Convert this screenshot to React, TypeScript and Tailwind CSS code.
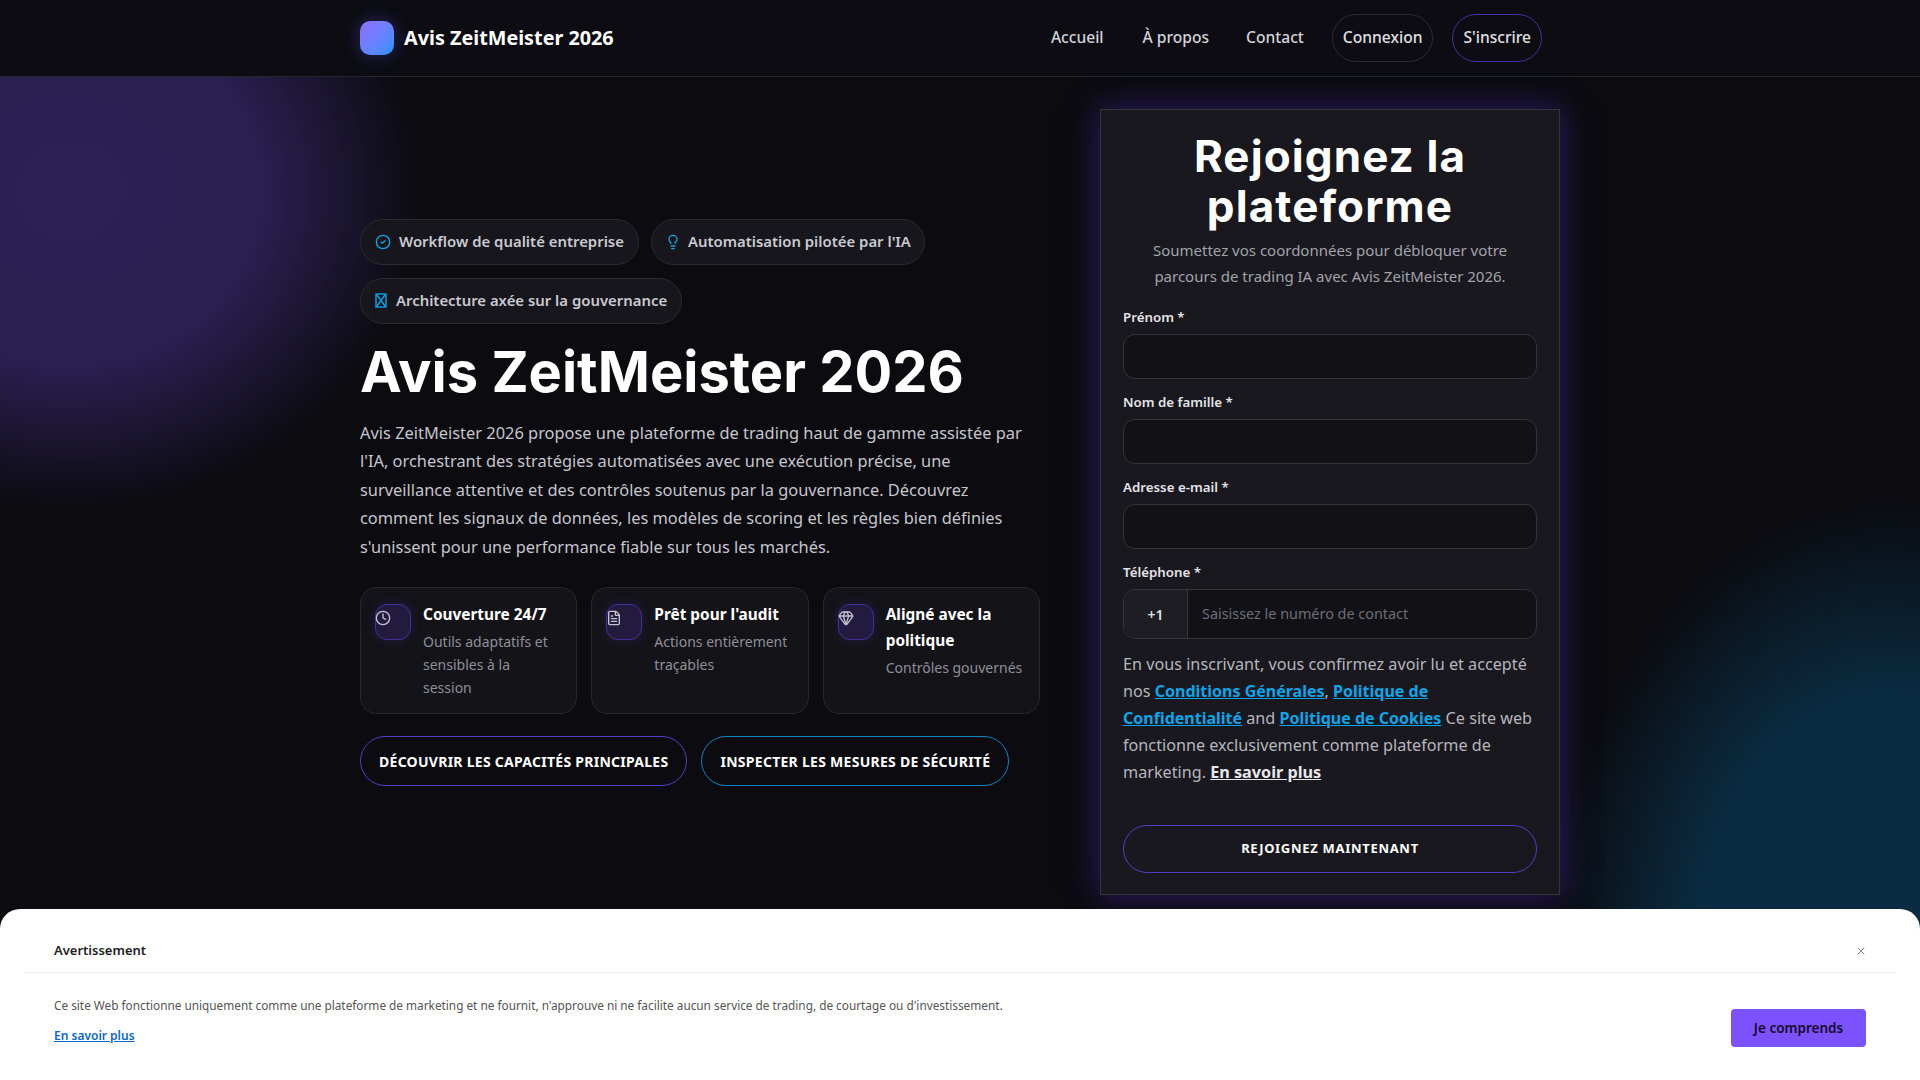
import { Clock, FileText, Gem, CircleCheck, Lightbulb, X } from "lucide-react";

const chipClass = "flex h-[46px] items-center rounded-full border border-[#2b2b33] bg-[#16161c] pl-[14px] pr-[14px] text-[14.9px] font-semibold text-[#c9c9d1]";
const labelClass = "block h-[27px] text-[13.3px] font-semibold leading-[20px] text-[#e4e4e8]";
const linkClass = "text-[16px] font-bold text-[#0ea5e9] underline";

function Field({ label }: { label: string }) {
  return (
    <div className="mb-[13px]">
      <label className={labelClass}>{label}</label>
      <div className="h-[45px] rounded-xl border border-[#34343b] bg-[#111116]" />
    </div>
  );
}

function Feature({ icon, title, desc }: { icon: React.ReactNode; title: string; desc: string }) {
  return (
    <div className="flex h-[127px] gap-3 rounded-2xl border border-[#27272e] bg-[#131318] px-[14px] pt-[14px]">
      <div className="mt-[2px] h-[36px] w-[36px] shrink-0 rounded-xl border border-[#43309a] bg-[#231b3d] pt-[5px] text-[#c4c4cc] shadow-[0_0_12px_rgba(90,50,200,0.25)]">
        <div className="-ml-[1px]">{icon}</div>
      </div>
      <div className="min-w-0">
        <div className="text-[15.4px] font-bold leading-[26px] text-white">{title}</div>
        <div className="mt-[2px] text-[14px] leading-[23px] text-[#8f8f98]">{desc}</div>
      </div>
    </div>
  );
}

export default function App() {
  return (
    <div className="relative h-screen w-full overflow-hidden bg-[#0b0b10] bg-[radial-gradient(ellipse_350px_320px_at_70px_190px,#2c2055_0%,#2a1f50_55%,rgba(42,31,80,0.5)_78%,transparent_100%),radial-gradient(ellipse_340px_450px_at_1890px_950px,#0a2c42_0%,#0a2c42_55%,rgba(10,44,66,0.5)_78%,transparent_100%)] font-['Noto_Sans',sans-serif]">
      <header className="h-[77px] border-b border-[#26262c] bg-[#0c0c12]">
        <div className="mx-auto flex h-[76px] w-[1200px] items-center pr-[18px]">
          <div className="h-[34px] w-[34px] rounded-[10px] bg-gradient-to-br from-[#8f6cff] to-[#1593ff] shadow-[0_0_18px_rgba(110,80,255,0.35)]" />
          <span className="ml-[10px] text-[19.8px] font-bold text-white">Avis ZeitMeister 2026</span>
          <nav className="ml-auto flex items-center text-[15.6px] font-medium text-[#d2d2d8]">
            <a className="mr-[39px]">Accueil</a>
            <a className="mr-[37px]">À propos</a>
            <a className="mr-[28px]">Contact</a>
            <a className="mr-[19px] flex h-[48px] items-center rounded-full border border-[#2b2b33] px-[10px] text-[#e0e0e4]">Connexion</a>
            <a className="flex h-[48px] items-center rounded-full border border-[#43309f] px-[10px] text-[#e0e0e4]">S'inscrire</a>
          </nav>
        </div>
      </header>

      <main className="mx-auto flex w-[1200px] items-center justify-between pt-[32px]">
        <section className="mt-[1px] w-[680px]">
          <div className="flex flex-wrap gap-x-3 gap-y-[13px]">
            <div className={chipClass}>
              <CircleCheck size={16} className="mr-[8px] text-[#0ea5e9]" />
              Workflow de qualité entreprise
            </div>
            <div className="flex h-[46px] items-center rounded-full border border-[#2b2b33] bg-[#16161c] pl-[13px] pr-[13px] text-[14.9px] font-semibold text-[#c9c9d1]">
              <Lightbulb size={16} className="mr-[7px] text-[#0ea5e9]" />
              Automatisation pilotée par l'IA
            </div>
            <div className={chipClass}>
              <svg width="12" height="15" viewBox="0 0 12 15" fill="none" stroke="#0ea5e9" strokeWidth="1.4" className="mr-[9px]">
                <rect x="1" y="1" width="10" height="13" />
                <path d="M2 2l8 11M10 2L2 13" />
              </svg>
              Architecture axée sur la gouvernance
            </div>
          </div>
          <h1 className="mt-[15px] font-['Inter',sans-serif] text-[56px] font-bold leading-[67px] text-white">Avis ZeitMeister 2026</h1>
          <p className="mt-[13px] text-[16.4px] leading-[28.6px] text-[#c6c6cd]">
            Avis ZeitMeister 2026 propose une plateforme de trading haut de gamme assistée par l'IA, orchestrant des stratégies automatisées avec une exécution précise, une surveillance attentive et des contrôles soutenus par la gouvernance. Découvrez comment les signaux de données, les modèles de scoring et les règles bien définies s'unissent pour une performance fiable sur tous les marchés.
          </p>
          <div className="mt-[26px] grid grid-cols-3 gap-[14px]">
            <Feature icon={<Clock size={16} />} title="Couverture 24/7" desc="Outils adaptatifs et sensibles à la session" />
            <Feature icon={<FileText size={16} />} title="Prêt pour l'audit" desc="Actions entièrement traçables" />
            <Feature icon={<Gem size={16} />} title="Aligné avec la politique" desc="Contrôles gouvernés" />
          </div>
          <div className="mt-[22px] flex gap-[14px]">
            <button className="h-[50px] rounded-full border border-[#5b3bc4] px-[18px] text-[14px] font-bold tracking-[0.27px] text-white">DÉCOUVRIR LES CAPACITÉS PRINCIPALES</button>
            <button className="h-[50px] rounded-full border border-[#0b86c4] px-[18px] text-[14px] font-bold tracking-[0.27px] text-white">INSPECTER LES MESURES DE SÉCURITÉ</button>
          </div>
        </section>

        <aside className="h-[786px] w-[460px] border border-[#34343b] bg-[#18181e] px-[22px] pt-[21px] shadow-[0_0_30px_rgba(85,50,200,0.5)]">
          <h2 className="text-center font-['Inter',sans-serif] text-[44px] font-bold leading-[50px] tracking-[1.1px] text-white">Rejoignez la plateforme</h2>
          <p className="mt-[6px] text-center text-[15px] leading-[26px] text-[#a3a3ab]">Soumettez vos coordonnées pour débloquer votre parcours de trading IA avec Avis ZeitMeister 2026.</p>
          <div className="mt-[18px]">
            <Field label="Prénom *" />
            <Field label="Nom de famille *" />
            <Field label="Adresse e-mail *" />
            <label className={labelClass}>Téléphone *</label>
            <div className="flex h-[50px] rounded-xl border border-[#34343b] bg-[#111116]">
              <div className="flex w-[64px] items-center justify-center rounded-l-xl border-r border-[#34343b] bg-[#1d1d23] text-[14px] font-semibold text-[#e4e4e8]">+1</div>
              <div className="flex items-center pl-[14px] text-[14.4px] text-[#6e6e76]">Saisissez le numéro de contact</div>
            </div>
          </div>
          <p className="mt-[12px] text-[16.2px] leading-[27px] text-[#b6b6bd]">
            En vous inscrivant, vous confirmez avoir lu et accepté nos <a className={linkClass}>Conditions Générales</a>, <a className={linkClass}>Politique de Confidentialité</a> and <a className={linkClass}>Politique de Cookies</a> Ce site web fonctionne exclusivement comme plateforme de marketing. <a className="font-bold text-[#e8e8ec] underline">En savoir plus</a>
          </p>
          <button className="mt-[39px] h-[48px] w-full rounded-full border border-[#5b3bc4] text-[13px] font-bold tracking-[0.7px] text-white">REJOIGNEZ MAINTENANT</button>
        </aside>
      </main>

      <div className="absolute inset-x-0 bottom-0 h-[171px] rounded-t-[20px] bg-white px-[24px]">
        <div className="flex h-[64px] items-center justify-between border-b border-[#ececec] px-[30px] pt-[21px]">
          <span className="text-[13px] font-semibold text-[#222]">Avertissement</span>
          <X size={12} className="mr-[-1px] text-[#8a8a8a]" />
        </div>
        <div className="flex justify-between pl-[30px] pr-[30px]">
          <div className="pt-[21px] text-[11.8px] text-[#555]">
            <p className="leading-[22px]">Ce site Web fonctionne uniquement comme une plateforme de marketing et ne fournit, n'approuve ni ne facilite aucun service de trading, de courtage ou d'investissement.</p>
            <a className="mt-[9px] block text-[12px] font-semibold leading-[22px] text-[#0a66c8] underline">En savoir plus</a>
          </div>
          <button className="mt-[36px] h-[38px] w-[135px] rounded-[4px] bg-[#7c52ff] text-[13.5px] font-semibold text-[#160a2e]">Je comprends</button>
        </div>
      </div>
    </div>
  );
}
